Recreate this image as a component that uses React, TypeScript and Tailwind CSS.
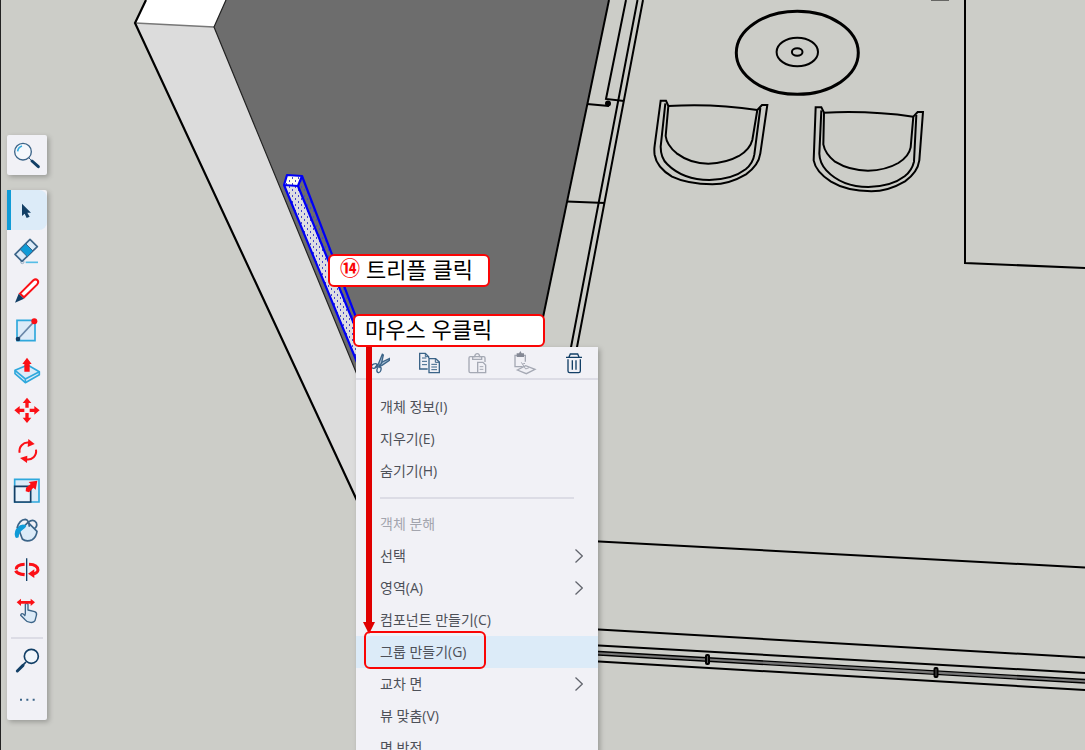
import type { ReactNode } from "react";
import { clsx } from "clsx";

const NAVY = "#123f66";
const STEEL = "#3b6488";
const BLUE = "#0f9bd7";
const PALE = "#dcebf8";
const RED = "#fb1016";

interface Tool {
  name: string;
  icon: ReactNode;
}

interface MenuItem {
  label: string;
  disabled?: boolean;
  active?: boolean;
  submenu?: boolean;
}

const tools: Tool[] = [
  {
    name: "Select",
    icon: <path d="M45 41V78L53 71L59 84L68 80L61 68H72Z" fill={NAVY} />,
  },
  {
    name: "Eraser",
    icon: (
      <>
        <path d="M56 97H93" stroke="#56bde6" strokeWidth="5" />
        <circle cx="46" cy="96" r="5" fill="#f1f1f6" stroke="#9db2c7" strokeWidth="3" />
        <path d="M69 28L91 50L45 94L24 73Z" fill={PALE} stroke={STEEL} strokeWidth="5" strokeLinejoin="round" />
        <path d="M56 41L78 63L61 80L39 58Z" fill={BLUE} stroke={STEEL} strokeWidth="3" />
      </>
    ),
  },
  {
    name: "Line",
    icon: (
      <>
        <path d="M39 71L79 31Q86 25 92 31Q96 37 90 44L51 82Z" fill="#ffffff" stroke={RED} strokeWidth="6" />
        <path d="M24 98L35 71L51 86Z" fill={NAVY} />
      </>
    ),
  },
  {
    name: "Rectangle",
    icon: (
      <>
        <path d="M30 31H84V92H30Z" fill={PALE} stroke="#2fa8dc" strokeWidth="5" />
        <path d="M33 87L82 34" stroke="#6987a8" strokeWidth="5" />
        <circle cx="82" cy="34" r="9" fill={RED} />
        <circle cx="33" cy="87" r="7" fill={NAVY} />
      </>
    ),
  },
  {
    name: "Push/Pull",
    icon: (
      <>
        <path d="M24 61V71L55 98L97 74V65L62 45Z" fill={PALE} stroke="#2fa8dc" strokeWidth="5" strokeLinejoin="round" />
        <path d="M24 61L55 87L97 65M55 87V98" fill="none" stroke="#2fa8dc" strokeWidth="5" />
        <path d="M60 23L74 42H68V65H52V42H46Z" fill={RED} />
      </>
    ),
  },
  {
    name: "Move",
    icon: (
      <g fill={RED}>
        <path id="move-arrow" d="M60 23L73 39H65V53H55V39H47Z" />
        <use href="#move-arrow" transform="rotate(90 60 61)" />
        <use href="#move-arrow" transform="rotate(180 60 61)" />
        <use href="#move-arrow" transform="rotate(270 60 61)" />
      </g>
    ),
  },
  {
    name: "Rotate",
    icon: (
      <>
        <path d="M38 68A25 25 0 0 1 66 38M87 59A25 25 0 0 1 57 88" fill="none" stroke={RED} strokeWidth="6" />
        <path d="M64 27L83 42L62 51Z" fill={RED} />
        <path d="M61 77L39 84L60 99Z" fill={RED} />
      </>
    ),
  },
  {
    name: "Scale",
    icon: (
      <>
        <path d="M23 28H96V96H23Z" fill={PALE} stroke="#2fa8dc" strokeWidth="5" />
        <path d="M23 49H71V96H23Z" fill="#e9f3fc" stroke={NAVY} strokeWidth="5" />
        <path d="M91 32L86 59L79 53L66 67L56 64L57 53L71 42L65 36Z" fill={RED} />
      </>
    ),
  },
  {
    name: "Paint",
    icon: (
      <>
        <path d="M37 63L63 37L90 64Q88 80 76 89Q58 97 46 87Z" fill={PALE} stroke={STEEL} strokeWidth="5" strokeLinejoin="round" />
        <path d="M56 45Q42 40 31 52Q21 63 24 78Q25 87 35 82Q35 68 47 59Q61 50 56 45Z" fill={BLUE} />
        <path d="M30 54Q37 29 55 28Q66 30 67 50M63 37Q79 25 88 38Q92 49 82 56" fill="none" stroke={STEEL} strokeWidth="5" />
      </>
    ),
  },
  {
    name: "Flip",
    icon: (
      <>
        <path d="M53 43Q27 44 28 58" fill="none" stroke={RED} strokeWidth="9" />
        <path d="M66 43Q92 44 93 60Q92 69 78 72" fill="none" stroke={RED} strokeWidth="9" />
        <path d="M82 58V84L63 71Z" fill={RED} />
        <path d="M26 62Q31 72 53 74" fill="none" stroke={RED} strokeWidth="10" />
        <path d="M59 25V93" stroke={NAVY} strokeWidth="4" />
      </>
    ),
  },
  {
    name: "Interact",
    icon: (
      <>
        <path
          d="M55 74V43Q60 37 63 43V60L83 65Q91 68 88 77L84 92Q80 99 70 97Q59 96 53 88L41 76Q42 69 49 72L55 78"
          fill={PALE}
          stroke={STEEL}
          strokeWidth="4"
          strokeLinejoin="round"
        />
        <path d="M29 37L42 26V33H71V26L84 37L71 48V41H42V48Z" fill={RED} />
      </>
    ),
  },
];

const menuGroups: MenuItem[][] = [
  [{ label: "개체 정보(I)" }, { label: "지우기(E)" }, { label: "숨기기(H)" }],
  [
    { label: "객체 분해", disabled: true },
    { label: "선택", submenu: true },
    { label: "영역(A)", submenu: true },
    { label: "컴포넌트 만들기(C)" },
    { label: "그룹 만들기(G)", active: true },
    { label: "교차 면", submenu: true },
    { label: "뷰 맞춤(V)" },
    { label: "면 반전" },
  ],
];

const clipboardActions: Tool[] = [
  {
    name: "Cut",
    icon: (
      <g fill="none" stroke={STEEL} strokeWidth="4">
        <path d="M70 29L36 45L30 52L47 50L70 34Z" fill="#a9c0d6" />
        <path d="M49 16L38 43L41 53L47 41L52 18Z" fill="#a9c0d6" />
        <ellipse cx="25" cy="51" rx="9" ry="6" transform="rotate(-25 25 51)" />
        <ellipse cx="39" cy="62" rx="6" ry="9" transform="rotate(15 39 62)" />
      </g>
    ),
  },
  {
    name: "Copy",
    icon: (
      <g fill="none" stroke={STEEL} strokeWidth="4">
        <path d="M38 60H14V13H31L41 23V27" />
        <path d="M31 13V23H41M21 27H34M21 37H36M21 47H36" strokeWidth="3" />
        <path d="M42 29H62L73 39V71H42Z" />
        <path d="M61 29V40H73M49 46H66M49 54H66M49 62H66" strokeWidth="3" />
      </g>
    ),
  },
  {
    name: "Paste",
    icon: (
      <g fill="none" stroke="#a5a9b4" strokeWidth="4">
        <path d="M43 71H22Q18 71 18 67V27Q18 23 22 23H62Q66 23 66 27V39" />
        <path d="M29 31V23H35Q36 14 43 14Q49 14 50 23H56V31Z" />
        <path d="M44 40H60L68 48V71H44Z" fill="#f1f1f6" />
        <path d="M50 53H61M50 61H61" strokeWidth="3" />
      </g>
    ),
  },
  {
    name: "Paste in place",
    icon: (
      <g fill="none" stroke="#a5a9b4" strokeWidth="4">
        <path d="M35 53H12V19H43V38" />
        <path d="M19 22V15H25L28 10L31 15H37V22Z" fill="#858995" stroke="#858995" />
        <path d="M19 63L44 50L72 61L46 74Z" />
        <path d="M31 40L44 60L54 56M35 45L42 43" strokeWidth="3" />
      </g>
    ),
  },
  {
    name: "Delete",
    icon: (
      <g fill="none" stroke={NAVY} strokeWidth="4">
        <path d="M18 25H66M27 24L31 15H53L57 24" />
        <path d="M24 31V66Q24 71 29 71H56Q61 71 61 66V31" />
        <path d="M37 34V62M48 34V62" />
      </g>
    ),
  },
];

function ToolIcon({ children }: { children: ReactNode }) {
  return (
    <svg viewBox="0 0 120 120" className="size-10" aria-hidden="true">
      {children}
    </svg>
  );
}

function ModelView() {
  return (
    <svg
      viewBox="0 0 1085 750"
      preserveAspectRatio="xMinYMin slice"
      className="absolute inset-0 h-full w-full"
      aria-hidden="true"
    >
      <defs>
        <pattern id="dots" width="6" height="6" patternUnits="userSpaceOnUse">
          <path d="M1 0H2V2H1ZM4 3H5V5H4Z" fill="#4646c8" />
        </pattern>
      </defs>

      {/* wall */}
      <path d="M146 0L135 23L214 27L226 0Z" fill="#ffffff" />
      <path d="M135 23L214 27L400 479V593Z" fill="#dcdcdc" />
      <path d="M226 0L214 27L400 479L520 430L609 0Z" fill="#6d6d6d" />
      <path d="M135 23L214 27" stroke="#777777" strokeWidth="1.5" />
      <path d="M226 0L214 27L400 479" fill="none" stroke="#222222" strokeWidth="1.2" />
      <path d="M146 0L135 23L400 593" fill="none" stroke="#000000" strokeWidth="2.2" />

      {/* selected post */}
      <path d="M284 185L298 186L380 388V416Z" fill="#dedee2" />
      <path d="M287 175L302 175L298 186L284 185Z" fill="#fffff0" />
      <path d="M287 175H302L380 380V416L284 185Z" fill="url(#dots)" />
      <path
        d="M284 185L287 175L302 176L298 186ZM284 185L380 418M298 186L380 388M302 176L380 380"
        fill="none"
        stroke="#0000f5"
        strokeWidth="2.2"
        strokeLinejoin="round"
      />

      <g fill="none" stroke="#000000" strokeWidth="2">
        {/* window frame */}
        <path d="M609 0L520 428" />
        <path d="M626 0L606 99L624 101M587 104L609 106M567 201.5L605 203" />
        <path d="M637.5 0L565.5 376M643 0L571.5 376" />
        <circle cx="608" cy="103.5" r="2" fill="#000000" />

        {/* floor outline */}
        <path d="M965 0V263L1085 268" />
        <path d="M931 0H949" strokeWidth="1" />
        <path d="M590 541L1085 567.5M590 629L1085 657.5M590 645L1085 673M590 661L1085 690" />
        <path d="M590 652.5L1085 681" stroke="#777777" strokeWidth="3" />
        <path d="M590 651L1085 679.5M590 654.5L1085 683" strokeWidth="1.4" />
        <rect x="706" y="655" width="3" height="9" rx="1" fill="#555555" />
        <rect x="934.5" y="668" width="3" height="9" rx="1" fill="#555555" />

        {/* round table */}
        <ellipse cx="797.3" cy="52.8" rx="61" ry="41.5" strokeWidth="3" />
        <ellipse cx="797.3" cy="52" rx="20.7" ry="14.3" />
        <ellipse cx="797.2" cy="52" rx="5.3" ry="3.8" />

        {/* chairs */}
        <g transform="translate(654 100) scale(0.3333)" strokeWidth="6">
          <path d="M20 2H36L43 18L35 108Q38 135 68 160Q110 191 163 191Q216 190 255 168Q288 148 295 120L310 30L324 15H340L319 160Q314 196 276 223Q225 253 175 253Q100 252 54 230Q8 202 2 165Q0 150 2 137Z" />
          <path d="M34 10L20 140Q20 174 40 193Q87 240 166 240Q235 239 275 208Q297 190 301 164L319 24" />
          <path d="M43 18Q180 10 310 30" />
        </g>
        <g transform="translate(813 107) scale(0.3333)" strokeWidth="6">
          <path d="M8 1H25L33 17L31 112Q36 140 66 164Q110 191 165 191Q218 190 256 168Q288 148 293 121L301 29L314 15H330L319 160Q314 196 276 223Q225 253 175 253Q100 252 54 224Q8 194 2 160Z" />
          <path d="M25 10L19 140Q20 168 40 190Q87 240 166 240Q235 239 275 208Q297 190 303 164L310 24" />
          <path d="M33 17Q170 10 301 29" />
        </g>
      </g>
      <path d="M0.5 0V750" stroke="#222222" />
    </svg>
  );
}

function Toolbar() {
  return (
    <aside className="relative flex w-10 flex-col gap-[15px]">
      <button
        aria-label="Search"
        className="size-10 rounded-xs bg-[#f1f1f6] shadow-[2px_2px_5px_rgba(0,0,0,0.25)]"
      >
        <ToolIcon>
          <circle cx="48" cy="50" r="25" fill="#f4f8fc" stroke={STEEL} strokeWidth="4" />
          <path d="M32 49Q33 37 45 33" fill="none" stroke="#35aee2" strokeWidth="5" />
          <path d="M66 69L73 76" stroke={STEEL} strokeWidth="3" />
          <path d="M75 78L94 95" stroke={NAVY} strokeWidth="9" strokeLinecap="round" />
        </ToolIcon>
      </button>

      <div className="flex flex-col rounded-xs bg-[#f1f1f6] shadow-[2px_2px_5px_rgba(0,0,0,0.25)]">
        {tools.map((tool, index) => (
          <button
            key={tool.name}
            aria-label={tool.name}
            className={clsx(
              "relative h-10 w-10",
              index === 0 && "rounded-r-lg bg-[#dcebf8]"
            )}
          >
            {index === 0 && (
              <span className="absolute inset-y-0 left-0 w-1 bg-[#0f9bd7]" />
            )}
            <ToolIcon>{tool.icon}</ToolIcon>
          </button>
        ))}
        <div className="mx-1 mt-[7px] mb-px h-0.5 bg-[#dcdce5]" />
        <button aria-label="Zoom" className="size-10">
          <ToolIcon>
            <circle cx="73" cy="49" r="21" fill="#f1f6fb" stroke={NAVY} strokeWidth="5" />
            <path d="M57 66L49 74" stroke={NAVY} strokeWidth="5" />
            <path d="M48 76L31 93" stroke={NAVY} strokeWidth="9" strokeLinecap="round" />
          </ToolIcon>
        </button>
        <button aria-label="More" className="size-10">
          <ToolIcon>
            <path d="M39 56H45V62H39ZM58 56H64V62H58ZM77 56H83V62H77Z" fill={STEEL} />
          </ToolIcon>
        </button>
      </div>
    </aside>
  );
}

function ContextMenu() {
  return (
    <div className="absolute top-[347px] left-[356px] w-[242px] bg-[#f1f1f6] pb-3 shadow-[2px_2px_5px_rgba(0,0,0,0.25)]">
      <div className="grid h-[33px] grid-cols-5 border-b-2 border-[#dcdce5]">
        {clipboardActions.map((action) => (
          <button
            key={action.name}
            aria-label={action.name}
            className="flex items-center justify-center"
          >
            <svg viewBox="0 0 84 84" className="size-7" aria-hidden="true">
              {action.icon}
            </svg>
          </button>
        ))}
      </div>

      <div className="pt-[11px]">
        {menuGroups.map((group, index) => (
          <div key={index}>
            {index > 0 && (
              <div className="mx-6 mt-[10px] mb-[9px] h-0.5 bg-[#dcdce5]" />
            )}
            {group.map((item) => (
              <button
                key={item.label}
                disabled={item.disabled}
                className={clsx(
                  "flex h-8 w-full items-center justify-between pr-[15px] pl-6 text-left text-sm",
                  item.disabled ? "text-[#a3a5ae]" : "text-[#4d5058]",
                  item.active && "bg-[#dcebf8]"
                )}
              >
                {item.label}
                {item.submenu && (
                  <svg viewBox="0 0 8 14" className="h-[14px] w-2" aria-hidden="true">
                    <path d="M0.5 0.5L7.3 7L0.5 13.5" fill="none" stroke="#62656d" strokeWidth="1.3" />
                  </svg>
                )}
              </button>
            ))}
          </div>
        ))}
      </div>
    </div>
  );
}

function Annotations() {
  return (
    <>
      <svg
        viewBox="0 0 12 288"
        className="absolute top-[346px] left-[363px] h-[288px] w-3"
        aria-hidden="true"
      >
        <path d="M3 0H9V276H12L6 288L0 276H3Z" fill="#e00000" />
      </svg>
      <div className="absolute top-[254px] left-[328px] flex h-[33px] w-[162px] items-center gap-1.5 rounded-md border-2 border-[#fa0505] bg-white pb-1 pl-2.5 text-[22px] leading-none text-black">
        <span className="text-xl leading-none font-bold text-[#fa0505]">⑭</span>
        <span>트리플 클릭</span>
      </div>
      <div className="absolute top-[314px] left-[353px] flex h-[33px] w-[192px] items-center rounded-md border-2 border-[#fa0505] bg-white pb-1 pl-2.5 text-[22px] leading-none text-black">
        마우스 우클릭
      </div>
      <div className="absolute top-[631px] left-[364px] h-[38px] w-[122px] rounded-md border-2 border-[#fa0505]" />
    </>
  );
}

export default function App() {
  return (
    <main className="relative h-screen overflow-hidden bg-[#cccdc8] pt-[135px] pl-[7px] font-['Open_Sans','Noto_Sans_CJK_KR',sans-serif]">
      <ModelView />
      <Toolbar />
      <ContextMenu />
      <Annotations />
    </main>
  );
}
